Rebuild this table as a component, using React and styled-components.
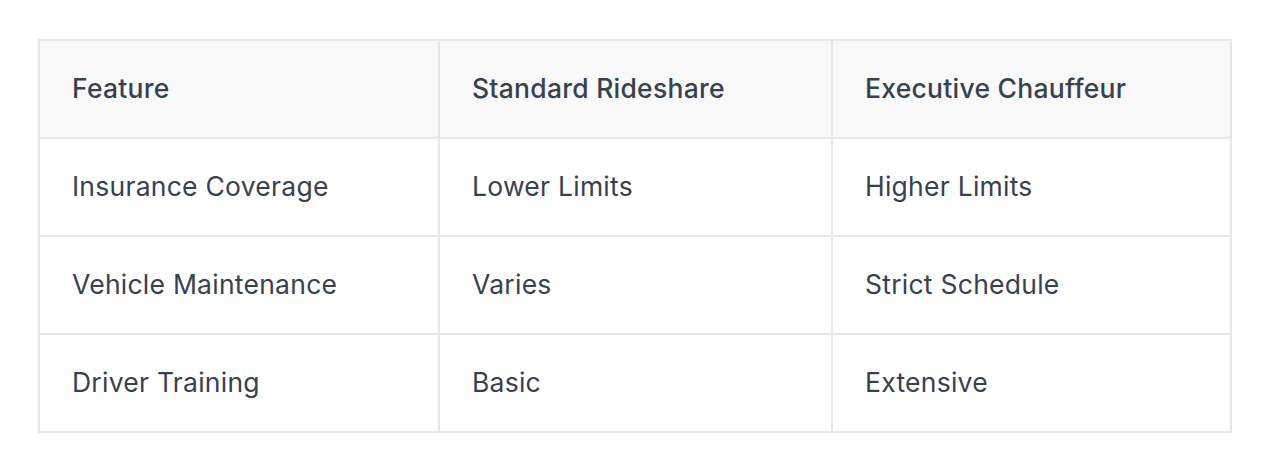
import React from 'react'
import styled, { createGlobalStyle } from 'styled-components'

const GlobalStyle = createGlobalStyle`
    * {
        box-sizing: border-box;
    }
    body {
        margin: 0;
        background: #ffffff;
        font-family: Inter, "Noto Sans", sans-serif;
    }
`

const Page = styled.div`
    padding: 39px 32px 37px 38px;
`

const Table = styled.table`
    width: 1194px;
    table-layout: fixed;
    border-collapse: separate;
    border-spacing: 0;
    border-top: 2px solid #e7e7e7;
    border-left: 2px solid #e7e7e7;
    color: #374151;
    font-size: 26.5px;
    line-height: 36px;
    letter-spacing: 0.25px;
`

const HeadCell = styled.th`
    width: ${p => p.$w}px;
    background: #f9f9f9;
    font-weight: 500;
    text-align: left;
    padding: 29px 32px 31px;
    border-right: 2px solid #e7e7e7;
    border-bottom: 2px solid #e7e7e7;
`

const Cell = styled.td`
    font-weight: 400;
    padding: 29px 32px 31px;
    border-right: 2px solid #e7e7e7;
    border-bottom: 2px solid #e7e7e7;
`

const columns = [
    { label: 'Feature', width: 400 },
    { label: 'Standard Rideshare', width: 393 },
    { label: 'Executive Chauffeur', width: 399 },
]

const rows = [
    ['Insurance Coverage', 'Lower Limits', 'Higher Limits'],
    ['Vehicle Maintenance', 'Varies', 'Strict Schedule'],
    ['Driver Training', 'Basic', 'Extensive'],
]

const App = () => {
    return (
        <Page>
            <GlobalStyle />
            <Table>
                <thead>
                    <tr>
                        {columns.map(c => (
                            <HeadCell key={c.label} $w={c.width}>{c.label}</HeadCell>
                        ))}
                    </tr>
                </thead>
                <tbody>
                    {rows.map(r => (
                        <tr key={r[0]}>
                            {r.map(v => <Cell key={v}>{v}</Cell>)}
                        </tr>
                    ))}
                </tbody>
            </Table>
        </Page>
    )
}

export default App
